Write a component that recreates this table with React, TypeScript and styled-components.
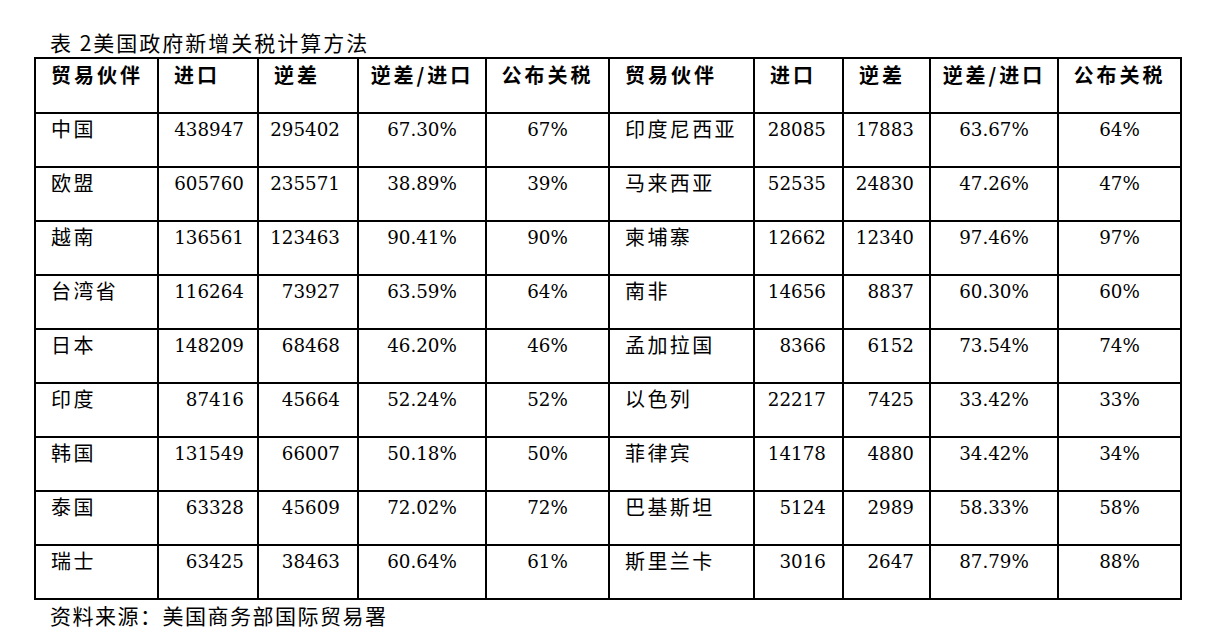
import styled, { createGlobalStyle } from "styled-components";

const GlobalStyle = createGlobalStyle`
  html, body {
    margin: 0;
    padding: 0;
    background: #fff;
    color: #000;
  }
`;

const Page = styled.div`
  width: 1210px;
  height: 642px;
  padding: 27px 0 0 34px;
  box-sizing: border-box;
  font-family: "Noto Sans CJK SC", sans-serif;
`;

const Caption = styled.div`
  font-size: 21px;
  line-height: 30px;
  height: 30px;
  padding-left: 16px;
  letter-spacing: 2px;
  font-weight: 400;
  white-space: nowrap;
`;

const Table = styled.table`
  border-collapse: collapse;
  table-layout: fixed;
  width: 1146px;
  border: 2px solid #000;
`;

const HeadCell = styled.th<{ $center?: boolean }>`
  border: 2px solid #000;
  height: 55px;
  box-sizing: border-box;
  padding: 2px ${(p) => (p.$center ? "0" : "15px")} 0;
  vertical-align: top;
  text-align: ${(p) => (p.$center ? "center" : "left")};
  font-family: "Noto Sans CJK SC", sans-serif;
  font-weight: 700;
  font-size: 20px;
  line-height: 28px;
  letter-spacing: 3px;
  white-space: nowrap;
  overflow: visible;
`;

const NameCell = styled.td`
  border: 2px solid #000;
  height: 54px;
  box-sizing: border-box;
  padding: 1px 15px 0;
  vertical-align: top;
  font-family: "Noto Sans CJK SC", sans-serif;
  font-weight: 400;
  font-size: 20px;
  line-height: 28px;
  letter-spacing: 2.4px;
  white-space: nowrap;
`;

const NumCell = styled.td<{ $align: "right" | "center"; $pad?: number }>`
  border: 2px solid #000;
  height: 54px;
  box-sizing: border-box;
  padding: 4px ${(p) => (p.$align === "right" ? p.$pad ?? 15 : 0)}px 0 0;
  vertical-align: top;
  text-align: ${(p) => p.$align};
  font-family: "DejaVu Serif", "Liberation Serif", serif;
  font-size: 18.3px;
  line-height: 24px;
  font-weight: 400;
  white-space: nowrap;
`;

const Footer = styled.div`
  font-size: 21px;
  line-height: 30px;
  padding-left: 16px;
  padding-top: 0;
  letter-spacing: 1.5px;
`;

type Row = [string, string, string, string, string];

const left: Row[] = [
  ["中国", "438947", "295402", "67.30%", "67%"],
  ["欧盟", "605760", "235571", "38.89%", "39%"],
  ["越南", "136561", "123463", "90.41%", "90%"],
  ["台湾省", "116264", "73927", "63.59%", "64%"],
  ["日本", "148209", "68468", "46.20%", "46%"],
  ["印度", "87416", "45664", "52.24%", "52%"],
  ["韩国", "131549", "66007", "50.18%", "50%"],
  ["泰国", "63328", "45609", "72.02%", "72%"],
  ["瑞士", "63425", "38463", "60.64%", "61%"],
];

const right: Row[] = [
  ["印度尼西亚", "28085", "17883", "63.67%", "64%"],
  ["马来西亚", "52535", "24830", "47.26%", "47%"],
  ["柬埔寨", "12662", "12340", "97.46%", "97%"],
  ["南非", "14656", "8837", "60.30%", "60%"],
  ["孟加拉国", "8366", "6152", "73.54%", "74%"],
  ["以色列", "22217", "7425", "33.42%", "33%"],
  ["菲律宾", "14178", "4880", "34.42%", "34%"],
  ["巴基斯坦", "5124", "2989", "58.33%", "58%"],
  ["斯里兰卡", "3016", "2647", "87.79%", "88%"],
];

const widths = [123, 100, 100, 128, 123, 145, 89, 87, 128, 123];

const headers = ["贸易伙伴", "进口", "逆差", "逆差/进口", "公布关税"];

export default function App() {
  return (
    <Page>
      <GlobalStyle />
      <Caption>表 2美国政府新增关税计算方法</Caption>
      <Table>
        <colgroup>
          {widths.map((w, i) => (
            <col key={i} style={{ width: w }} />
          ))}
        </colgroup>
        <thead>
          <tr>
            {[...headers, ...headers].map((h, i) => (
              <HeadCell key={i} $center={i % 5 >= 3}>
                {h}
              </HeadCell>
            ))}
          </tr>
        </thead>
        <tbody>
          {left.map((l, i) => {
            const r = right[i];
            return (
              <tr key={i}>
                <NameCell>{l[0]}</NameCell>
                <NumCell $align="right" $pad={13}>{l[1]}</NumCell>
                <NumCell $align="right" $pad={17}>{l[2]}</NumCell>
                <NumCell $align="center">{l[3]}</NumCell>
                <NumCell $align="center">{l[4]}</NumCell>
                <NameCell>{r[0]}</NameCell>
                <NumCell $align="right" $pad={16}>{r[1]}</NumCell>
                <NumCell $align="right" $pad={15}>{r[2]}</NumCell>
                <NumCell $align="center">{r[3]}</NumCell>
                <NumCell $align="center">{r[4]}</NumCell>
              </tr>
            );
          })}
        </tbody>
      </Table>
      <Footer>资料来源：美国商务部国际贸易署</Footer>
    </Page>
  );
}
